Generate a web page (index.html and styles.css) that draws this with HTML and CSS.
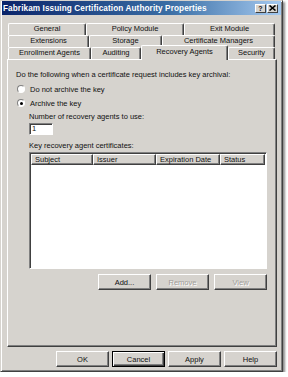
FILE: index.html
```html
<!DOCTYPE html>
<html lang="en">
<head>
  <meta charset="UTF-8" />
  <title>Fabrikam Issuing Certification Authority Properties</title>
  <link rel="stylesheet" href="styles.css">
</head>
<body>

<div class="dialog">
  <div class="titlebar">
    <span class="title">Fabrikam Issuing Certification Authority Properties</span>
    <div class="caption-btns">
      <span class="cbtn">?</span>
      <span class="cbtn cbtn-close">
        <svg width="7" height="6" viewBox="0 0 7 6"><path d="M0.5 0.5 L6.5 5.5 M6.5 0.5 L0.5 5.5" stroke="#000" stroke-width="1.6"/></svg>
      </span>
    </div>
  </div>

  <div class="tabs">
    <div class="tab-row">
      <div class="tab w78">General</div>
      <div class="tab w98">Policy Module</div>
      <div class="tab w91">Exit Module</div>
    </div>
    <div class="tab-row">
      <div class="tab w81">Extensions</div>
      <div class="tab w73">Storage</div>
      <div class="tab w113">Certificate Managers</div>
    </div>
    <div class="tab-row">
      <div class="tab w83">Enrollment Agents</div>
      <div class="tab w50">Auditing</div>
      <div class="tab w87 selected">Recovery Agents</div>
      <div class="tab w47">Security</div>
    </div>
  </div>

  <div class="panel">
    <div class="intro">Do the following when a certificate request includes key archival:</div>
    <div class="radio-row">
      <span class="radio"></span>
      <span>Do not archive the key</span>
    </div>
    <div class="radio-row">
      <span class="radio checked"></span>
      <span>Archive the key</span>
    </div>

    <div class="indent">
      <div class="label first">Number of recovery agents to use:</div>
      <div class="field">1</div>
      <div class="label second">Key recovery agent certificates:</div>
      <div class="listview">
        <div class="lv-head">
          <div class="col c-subject">Subject</div>
          <div class="col c-issuer">Issuer</div>
          <div class="col c-exp">Expiration Date</div>
          <div class="col c-status">Status</div>
        </div>
      </div>
      <div class="list-btns">
        <button class="btn">Add...</button>
        <button class="btn" disabled>Remove</button>
        <button class="btn" disabled>View</button>
      </div>
    </div>
  </div>

  <div class="footer">
    <button class="btn">OK</button>
    <button class="btn default">Cancel</button>
    <button class="btn">Apply</button>
    <button class="btn">Help</button>
  </div>
</div>

</body>
</html>
```

FILE: styles.css
```css
* {
  box-sizing: border-box;
}

body {
  margin: 0;
  background: #fff;
  font-family: "Liberation Sans", Arial, sans-serif;
  font-size: 7.5px;
  color: #111;
}

.dialog {
  width: 283px;
  height: 372px;
  padding: 0 1px 1px 1px;
  background: #d6d3ce;
  border: 1px solid;
  border-color: #d6d3ce #404040 #404040 #d6d3ce;
  box-shadow: inset 1px 1px #fff, inset -1px -1px #808080, 2px 2px 2px rgba(0,0,0,0.45);
}

.titlebar {
  height: 14px;
  display: flex;
  align-items: center;
  justify-content: space-between;
  padding: 0 3px 0 1px;
  background: linear-gradient(to right, #0a246a, #3a6ea5 60%, #a6caf0);
}

.title {
  color: #fff;
  font-weight: bold;
  font-size: 8.2px;
  letter-spacing: 0.1px;
}

.caption-btns {
  display: flex;
  gap: 1px;
}

.cbtn {
  width: 11px;
  height: 9px;
  display: flex;
  align-items: center;
  justify-content: center;
  background: #d6d3ce;
  font-weight: bold;
  font-size: 7px;
  line-height: 1;
  border: 1px solid;
  border-color: #fff #404040 #404040 #fff;
}

/* tabs */
.tabs {
  margin: 8px 6px 0 6px;
}

.tab-row {
  display: flex;
  height: 12px;
  align-items: flex-start;
}

.tab {
  height: 12px;
  line-height: 10px;
  text-align: center;
  white-space: nowrap;
  background: #d6d3ce;
  border-top: 1px solid #fff;
  border-left: 1px solid #fff;
  border-right: 1px solid #404040;
  box-shadow: inset -1px 0 #808080;
  border-radius: 2px 2px 0 0;
}

.tab.selected {
  position: relative;
  z-index: 1;
  height: 15px;
  margin-top: -2px;
  line-height: 11px;
}

.w47 { width: 47px; }
.w50 { width: 50px; }
.w73 { width: 73px; }
.w78 { width: 78px; }
.w81 { width: 81px; }
.w83 { width: 83px; }
.w87 { width: 87px; }
.w91 { width: 91px; }
.w98 { width: 98px; }
.w113 { width: 113px; }

/* page */
.panel {
  margin-left: 5px;
  width: 270px;
  height: 288px;
  padding: 10px 8px 0 8px;
  border: 1px solid;
  border-color: #fff #404040 #404040 #fff;
  box-shadow: inset -1px -1px #808080;
}

.intro {
  line-height: 10px;
}

.radio-row {
  display: flex;
  align-items: center;
  height: 10px;
  margin-top: 4px;
  margin-left: 1px;
}

.radio {
  width: 8px;
  height: 8px;
  margin-right: 5px;
  border-radius: 50%;
  background: #fff;
  border: 1px solid;
  border-color: #808080 #fff #fff #808080;
  box-shadow: 0 0 0 0.5px #d6d3ce;
  display: flex;
  align-items: center;
  justify-content: center;
}

.radio.checked::after {
  content: "";
  width: 3px;
  height: 3px;
  border-radius: 50%;
  background: #000;
}

.indent {
  margin-left: 13px;
}

.label {
  line-height: 10px;
}

.label.first {
  margin-top: 4px;
}

.label.second {
  margin-top: 6px;
}

.field {
  width: 24px;
  height: 12px;
  margin-top: 1px;
  padding-left: 2px;
  line-height: 9px;
  background: #fff;
  border: 1px solid;
  border-color: #808080 #fff #fff #808080;
  box-shadow: inset 1px 1px #404040;
}

.listview {
  width: 238px;
  height: 117px;
  margin-top: 1px;
  background: #fff;
  border: 1px solid;
  border-color: #808080 #fff #fff #808080;
  box-shadow: inset 1px 1px #404040;
  padding: 1px 0 0 1px;
}

.lv-head {
  display: flex;
  height: 11px;
}

.col {
  height: 11px;
  line-height: 9px;
  padding-left: 3px;
  white-space: nowrap;
  background: #d6d3ce;
  border: 1px solid;
  border-color: #fff #404040 #404040 #fff;
  box-shadow: inset -1px -1px #808080;
}

.c-subject { width: 62px; }
.c-issuer { width: 63px; }
.c-exp { width: 64px; }
.c-status { width: 45px; }

/* buttons */
.btn {
  width: 53px;
  height: 16px;
  padding: 0;
  font-family: inherit;
  font-size: 7.5px;
  color: #111;
  background: #d6d3ce;
  border: 1px solid;
  border-color: #fff #404040 #404040 #fff;
  box-shadow: inset -1px -1px #808080;
}

.btn:disabled {
  color: #a09d98;
  text-shadow: 1px 1px #fff;
}

.btn.default {
  outline: 1px solid #000;
  outline-offset: -1px;
  border-color: #000;
  box-shadow: inset 1px 1px #fff, inset -1px -1px #404040, inset -2px -2px #808080;
}

.list-btns {
  display: flex;
  justify-content: flex-end;
  gap: 5px;
  width: 238px;
  margin-top: 5px;
}

.footer {
  display: flex;
  justify-content: flex-end;
  gap: 3px;
  margin: 4px 4px 0 0;
}
```
